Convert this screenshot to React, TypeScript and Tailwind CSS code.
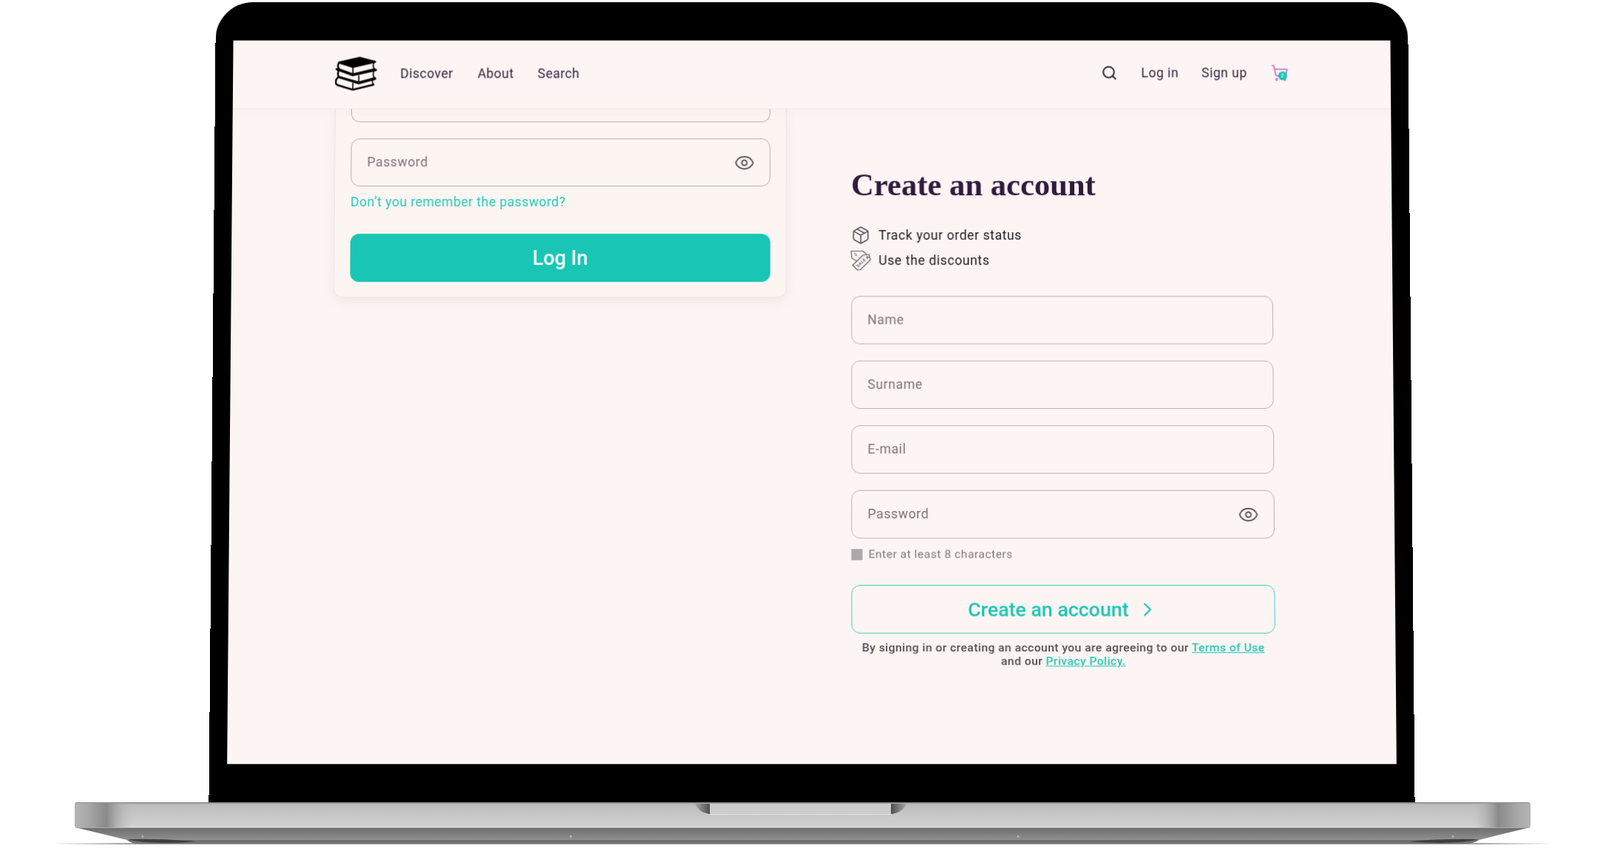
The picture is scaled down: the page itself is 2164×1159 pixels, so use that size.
import { ChevronRight, Eye, Package, Search, ShoppingCart } from 'lucide-react'

const roboto = "font-['Roboto',sans-serif]"

function BooksLogo() {
  return (
    <svg viewBox="0 0 57 46" className="w-[57px] h-[46px] shrink-0" fill="none" stroke="#000" strokeWidth="2.4" strokeLinejoin="round" strokeLinecap="round">
      <path d="M5 8 L33 1.5 L54 7 L24 14 Z" fill="#000" />
      <path d="M5 8 C3 12 3.5 16 6 17.5 L24 24 L53 17" />
      <path d="M24 14 V24" strokeWidth="1.6" />
      <path d="M53 7 C51 10 51 14 53 17" strokeWidth="1.6" />
      <path d="M2 17 L24 25 L55 18" strokeWidth="3" />
      <path d="M5 18 C3 22 3.5 27 6 28 L32 35 L54 29" />
      <path d="M32 26 V35" strokeWidth="1.6" />
      <path d="M53 18 C51 22 51 26 53 29" strokeWidth="1.6" />
      <path d="M6 28 L32 36 L54 30" strokeWidth="3" />
      <path d="M4 28 C0 31 0 37 3 38.5 L24 45 L52 38" />
      <path d="M24 36 V45" strokeWidth="1.6" />
      <path d="M52 30 C50 33 50 36 52 38" strokeWidth="1.6" />
    </svg>
  )
}

function SaleIcon() {
  return (
    <svg viewBox="0 0 28 28" className="w-[28px] h-[28px] shrink-0" fill="none" stroke="#66606a" strokeWidth="1.2" strokeLinejoin="round">
      <path d="M1 1.5 H17 L22 6 L9 15 L2 11 Z" />
      <path d="M3 20.5 L17 7 L25 6 L27 13 L13.5 26.5 L9.5 27 Z" fill="#fdf5f3" />
      <circle cx="23" cy="10" r="1.2" />
      <text x="5" y="8" fontSize="6" fill="#66606a" stroke="none" fontWeight="700">%</text>
      <text x="14.5" y="19" fontSize="5.5" fill="#66606a" stroke="none" fontWeight="700" textAnchor="middle" transform="rotate(-43 14.5 17)">SALE</text>
    </svg>
  )
}

function Field({ label, eye, className }: { label: string; eye?: boolean; className?: string }) {
  return (
    <div className={`h-[65px] rounded-xl border-[1.5px] border-[#b7b3b5] flex items-center justify-between pl-[21px] pr-[20px] ${className ?? ''}`}>
      <span className="text-[17.5px] tracking-[0.6px] text-[#7b7279]">{label}</span>
      {eye && <Eye className="w-[28px] h-[28px] text-[#5f5a60]" strokeWidth={1.7} />}
    </div>
  )
}

function Header() {
  return (
    <header className="relative z-10 h-[93px] shrink-0 flex items-center justify-between px-[138px] pb-[2px] bg-[#fdf5f3] border-b border-[#f3ecea] shadow-[0_6px_12px_rgba(80,60,60,0.03)]">
      <nav className="flex items-center text-[17.5px] tracking-[0.5px] text-[#35213f]">
        <BooksLogo />
        <a className="ml-[31px]">Discover</a>
        <a className="ml-[33px]">About</a>
        <a className="ml-[32px]">Search</a>
      </nav>
      <div className="flex items-center text-[17.5px] tracking-[0.5px] text-[#35213f] -mt-[2px]">
        <Search className="w-[22px] h-[22px] text-[#35213f]" strokeWidth={2.2} />
        <a className="ml-[32px]">Log in</a>
        <a className="ml-[31px]">Sign up</a>
        <span className="relative ml-[32px] w-[24px] h-[24px]">
          <ShoppingCart className="w-[24px] h-[24px] text-[#cd6fdd]" strokeWidth={1.8} />
          <span className="absolute left-[10px] top-[10px] w-[12px] h-[12px] rounded-full bg-[#19c5b4] text-white text-[8px] leading-[12px] text-center">2</span>
        </span>
      </div>
    </header>
  )
}

function LoginCard() {
  return (
    <section className="ml-[138px] w-[610px] h-fit px-[21px] pb-[20px] bg-[#fcf5f2] rounded-b-xl border-x border-b border-[#ece7e5] shadow-[0_6px_16px_rgba(60,40,40,0.06)]">
      <div className="h-[18px] rounded-b-xl border-[1.5px] border-t-0 border-[#b7b3b5]" />
      <Field label="Password" eye className="mt-[22px]" />
      <a className="block mt-[8px] text-[17.5px] tracking-[0.5px] text-[#22c9b8]">Don’t you remember the password?</a>
      <button className="mt-[30px] w-full h-[65px] rounded-xl bg-[#19c5b4] text-white text-[27px] font-medium">Log In</button>
    </section>
  )
}

function RegisterForm() {
  return (
    <section className="ml-[87px] w-[568px] pt-[80px]">
      <h1 className="font-['Liberation_Serif',serif] font-bold text-[42.5px] leading-[46px] text-[#2f1b3d]">Create an account</h1>
      <ul className="mt-[31px] flex flex-col gap-[6px] text-[17.5px] tracking-[0.6px] text-[#1d1a20]">
        <li className="flex items-center gap-[11px] h-[28px]">
          <Package className="w-[26px] h-[26px] text-[#5c565f]" strokeWidth={1.5} />
          Track your order status
        </li>
        <li className="flex items-center gap-[10px] h-[28px] -ml-[1px]">
          <SaleIcon />
          Use the discounts
        </li>
      </ul>
      <div className="mt-[34px] flex flex-col gap-[22px]">
        <Field label="Name" />
        <Field label="Surname" />
        <Field label="E-mail" />
        <Field label="Password" eye />
      </div>
      <div className="mt-[10px] flex items-center gap-[8px] text-[15.5px] tracking-[0.5px] text-[#7f7880]">
        <span className="w-[15px] h-[15px] bg-[#aaa8ab]" />
        Enter at least 8 characters
      </div>
      <button className="mt-[29px] w-full h-[65px] rounded-xl border-[1.5px] border-[#3fcfc0] text-[#19c5b4] text-[26.5px] font-medium flex items-center justify-center gap-[10px]">
        Create an account
        <ChevronRight className="w-[30px] h-[30px]" strokeWidth={1.8} />
      </button>
      <p className="mt-[10px] text-center text-[15.5px] leading-[18px] font-medium tracking-[0.45px] text-[#514b52]">
        By signing in or creating an account you are agreeing to our{' '}
        <a className="underline text-[#22c9b8]">Terms of Use</a>
        <br />
        and our <a className="underline text-[#22c9b8]">Privacy Policy.</a>
      </p>
    </section>
  )
}

function LaptopBase() {
  return (
    <svg viewBox="0 0 2164 74" className="block w-[2164px] h-[74px] shrink-0">
      <defs>
        <linearGradient id="top" x1="0" x2="0" y1="0" y2="1">
          <stop offset="0" stopColor="#7e7e7e" />
          <stop offset="0.08" stopColor="#bdbdbd" />
          <stop offset="0.9" stopColor="#d0d0d0" />
          <stop offset="0.96" stopColor="#dcdcdc" />
          <stop offset="1" stopColor="#8a8a8a" />
        </linearGradient>
        <linearGradient id="ends" x1="0" x2="1" y1="0" y2="0">
          <stop offset="0" stopColor="#b4b4b4" />
          <stop offset="0.008" stopColor="#aaa" />
          <stop offset="0.022" stopColor="#8a8a8a" />
          <stop offset="0.04" stopColor="#bcbcbc" stopOpacity="0" />
          <stop offset="0.96" stopColor="#bcbcbc" stopOpacity="0" />
          <stop offset="0.978" stopColor="#8a8a8a" />
          <stop offset="0.992" stopColor="#aaa" />
          <stop offset="1" stopColor="#b4b4b4" />
        </linearGradient>
        <linearGradient id="low" x1="0" x2="0" y1="0" y2="1">
          <stop offset="0" stopColor="#6c6c6c" />
          <stop offset="0.75" stopColor="#8f8f8f" />
          <stop offset="0.78" stopColor="#6e6e6e" />
          <stop offset="1" stopColor="#747474" />
        </linearGradient>
        <linearGradient id="shadow" x1="0" x2="1" y1="0" y2="0">
          <stop offset="0" stopColor="#999" stopOpacity="0" />
          <stop offset="0.05" stopColor="#999" stopOpacity="0.9" />
          <stop offset="0.95" stopColor="#999" stopOpacity="0.9" />
          <stop offset="1" stopColor="#999" stopOpacity="0" />
        </linearGradient>
        <linearGradient id="nl" x1="0" x2="1" y1="0" y2="0">
          <stop offset="0" stopColor="#a8a8a8" />
          <stop offset="1" stopColor="#4e4e4e" />
        </linearGradient>
        <linearGradient id="nr" x1="0" x2="1" y1="0" y2="0">
          <stop offset="0" stopColor="#4e4e4e" />
          <stop offset="1" stopColor="#a8a8a8" />
        </linearGradient>
      </defs>
      <rect x="70" y="55" width="2030" height="2" fill="url(#shadow)" />
      <path d="M102 34 L172 51 Q176 56 190 56 H1980 Q1994 56 2000 51 L2069 34 Z" fill="url(#low)" />
      <path d="M172 50 Q205 58 265 53 Q220 49 172 50 Z" fill="#3e3e3e" />
      <path d="M1906 53 Q1966 58 2000 50 Q1950 49 1906 53 Z" fill="#3e3e3e" />
      <rect x="101" y="0" width="1969" height="35" rx="3" fill="url(#top)" />
      <rect x="101" y="1" width="1969" height="33" rx="3" fill="url(#ends)" />
      <path d="M940 2 H960 V16 Q945 14 940 2 Z" fill="url(#nl)" />
      <path d="M1205 2 H1226 Q1221 14 1205 16 Z" fill="url(#nr)" />
      <rect x="960" y="2" width="245" height="14" fill="#cccccc" />
      <rect x="960" y="16" width="245" height="1" fill="#e2e2e2" />
      <circle cx="193" cy="46" r="1.5" fill="#b5b5b5" />
      <circle cx="772" cy="46" r="1.5" fill="#b5b5b5" />
      <circle cx="1377" cy="46" r="1.5" fill="#b5b5b5" />
      <circle cx="1965" cy="46" r="1.5" fill="#b5b5b5" />
    </svg>
  )
}

export default function App() {
  return (
    <div className={`w-[2164px] h-[1159px] overflow-hidden bg-white flex flex-col items-center pt-[3px] ${roboto}`}>
      <div className="perspective-[2000px] shrink-0 ml-[32px] h-[1070px]">
        <div className="w-[1612px] h-[1076px] origin-top rotate-x-[1.25deg] bg-black rounded-t-[50px] pt-[52px] px-[24px]">
          <div className="h-[973px] bg-[#fdf5f3] flex flex-col overflow-hidden">
            <Header />
            <main className="flex items-start">
              <LoginCard />
              <RegisterForm />
            </main>
          </div>
        </div>
      </div>
      <div className="mt-[12px]">
        <LaptopBase />
      </div>
    </div>
  )
}
